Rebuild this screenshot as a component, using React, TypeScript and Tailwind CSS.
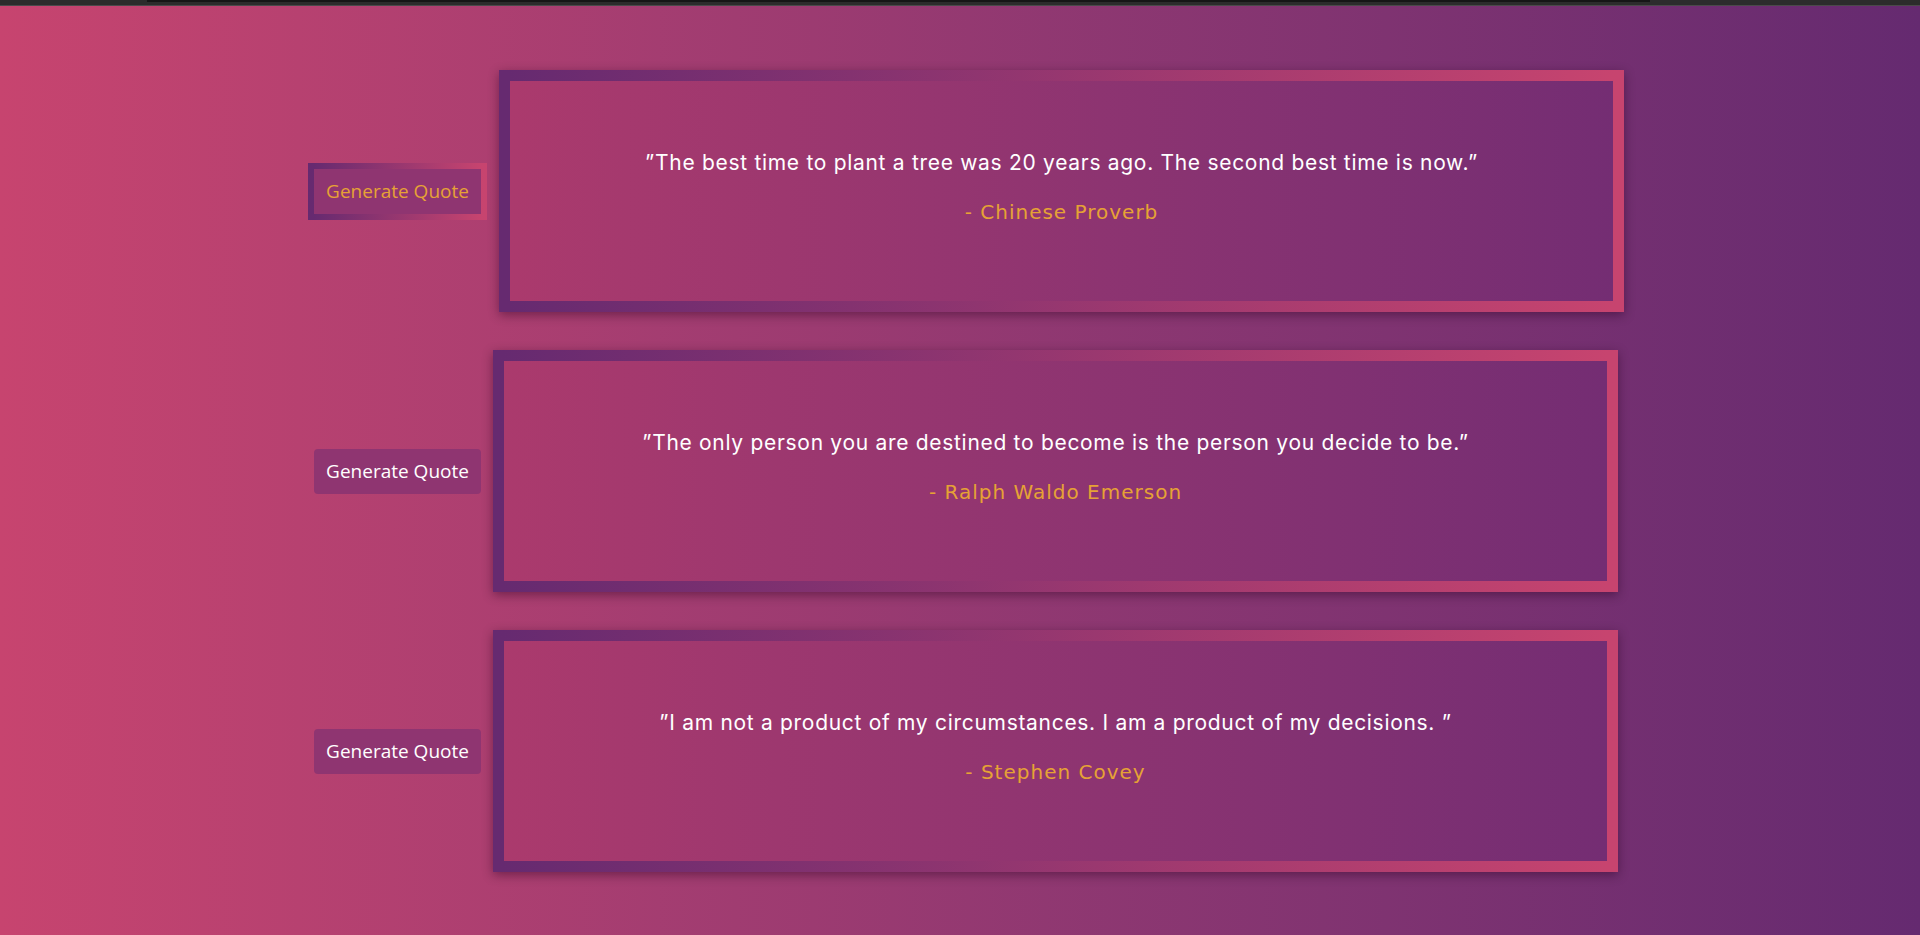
import React from 'react';

const quotes = [
  {
    text: '”The best time to plant a tree was 20 years ago. The second best time is now.”',
    author: '- Chinese Proverb',
  },
  {
    text: '”The only person you are destined to become is the person you decide to be.”',
    author: '- Ralph Waldo Emerson',
  },
  {
    text: '”I am not a product of my circumstances. I am a product of my decisions. ”',
    author: '- Stephen Covey',
  },
];

const App = () => {
  return (
    <div className="min-h-[935px] bg-gradient-to-r from-[#c7446f] to-[#652a70]">
      {/* window strip */}
      <div className="h-[6px] bg-[#2c2c2c] border-b border-[#4a4a4a] pl-[147px]">
        <div className="w-[1503px] h-[2px] bg-[#161616]"></div>
      </div>

      <div className="flex flex-col gap-[38px] pt-[64px] pb-[56px]">
        {quotes.map((q, index) => (
          <div key={index} className="flex items-center justify-center gap-[12px] pl-[12px]">
            {index === 0 ? (
              <button className="w-[179px] border-[6px] [border-image:linear-gradient(to_right,#662a70,#c7446f)_1] bg-[#8f3571] py-[8px] leading-[29px] text-[19px] text-[#e6a235] font-['Open_Sans',sans-serif]">
                Generate Quote
              </button>
            ) : (
              <button className="w-[167px] rounded-[4px] bg-[#8f3571] py-[8px] leading-[29px] text-[19px] text-white font-['Open_Sans',sans-serif]">
                Generate Quote
              </button>
            )}

            <div className="w-[1125px] h-[242px] border-[11px] [border-image:linear-gradient(to_right,#662a70,#c7446f)_1] bg-gradient-to-r from-[#ab3a6d] to-[#742d73] shadow-[0_3px_10px_rgba(40,0,30,0.45)] pt-[68px] text-center">
              <p className="text-[21px] leading-[28px] tracking-[0.7px] text-white font-['Inter',sans-serif]">{q.text}</p>
              <p className="mt-[21px] text-[20px] leading-[28px] tracking-[1px] text-[#e6a235] font-['DejaVu_Sans',sans-serif]">{q.author}</p>
            </div>
          </div>
        ))}
      </div>
    </div>
  );
};

export default App;
